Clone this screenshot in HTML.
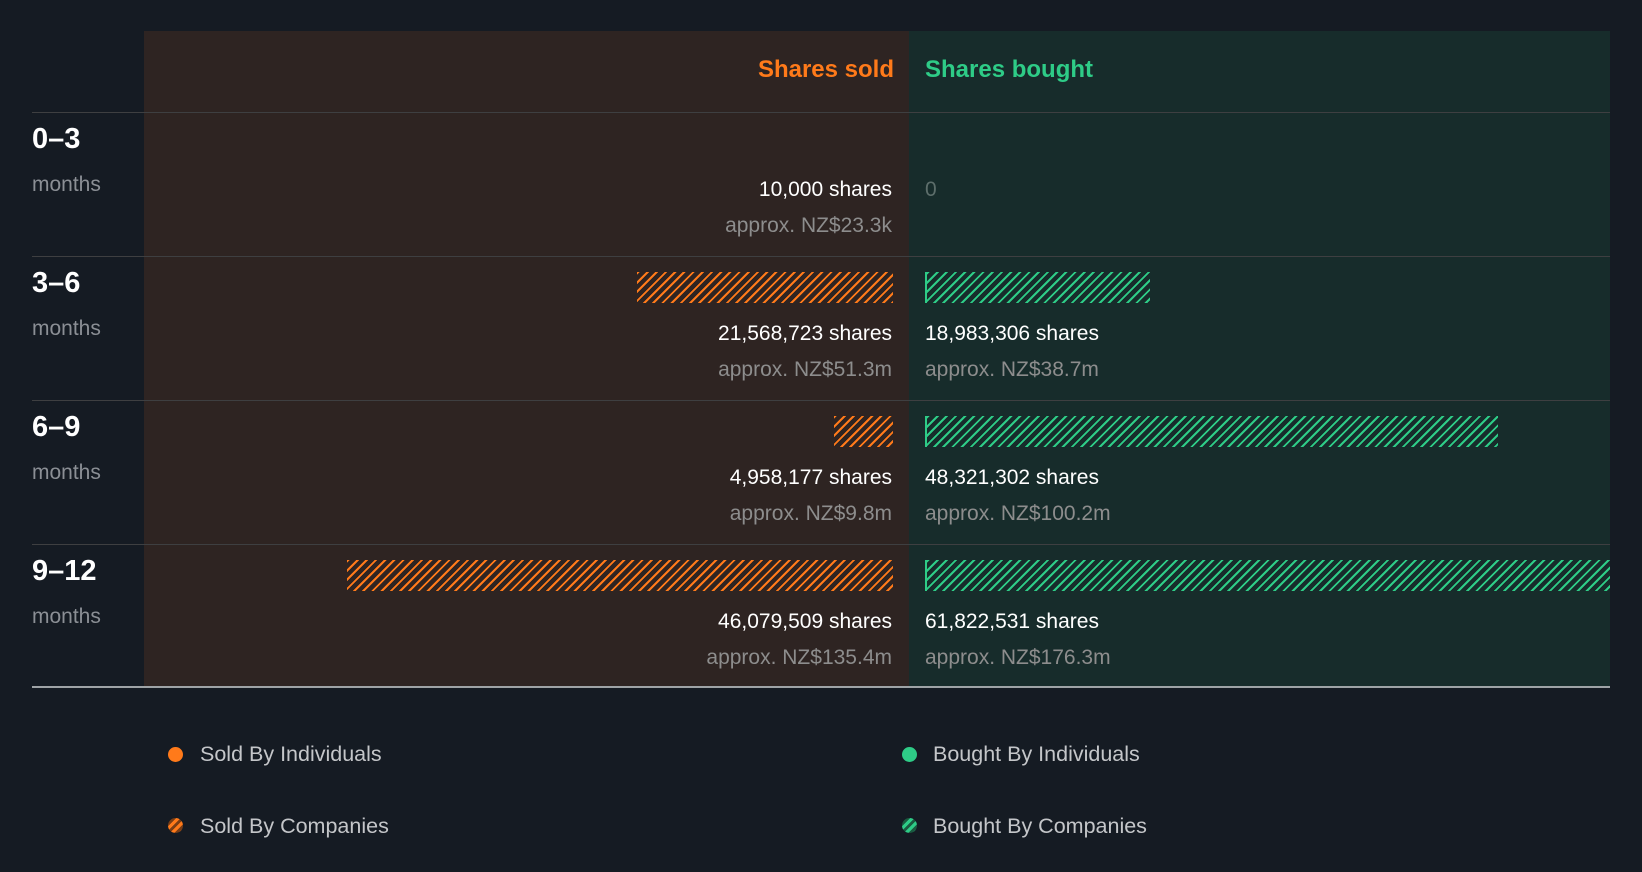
<!DOCTYPE html>
<html><head><style>
*{margin:0;padding:0;box-sizing:border-box}
body{width:1642px;height:872px;background:#151b23;font-family:"Liberation Sans",sans-serif;position:relative;overflow:hidden}
.a{position:absolute}
.sold{left:144px;top:31px;width:765px;height:656px;background:#2e2422}
.bought{left:909px;top:31px;width:701px;height:656px;background:#172c2b}
.line{left:32px;width:1578px;height:1px;background:#3e3f41}
.h{top:56px;font-weight:bold;font-size:24px}
.lab{left:32px;font-weight:bold;font-size:29px;color:#fff}
.mon{left:32px;font-size:21px;color:#8b8f95}
.sh{font-size:21px;color:#fff}
.ap{font-size:21px;color:#8d8d8d}
.r{right:750px;text-align:right}
.l{left:925px}
.bs{height:31px;background:repeating-linear-gradient(135deg,#ff7a1a 0 2px,transparent 2px 6.5px)}
.bb{height:31px;background:repeating-linear-gradient(135deg,#2ecc87 0 2px,transparent 2px 6.5px);border-left:2px solid #2ecc87}
.lg{font-size:21.5px;color:#c4c6c9}
.dot{width:15px;height:15px;border-radius:50%}
</style></head><body>
<div class="a sold"></div><div class="a bought"></div>
<div class="a h" style="right:748px;color:#ff7a1a">Shares sold</div>
<div class="a h" style="left:925px;color:#2ecc87">Shares bought</div>
<div class="a line" style="top:112px"></div>
<div class="a line" style="top:256px"></div>
<div class="a line" style="top:400px"></div>
<div class="a line" style="top:544px"></div>
<div class="a line" style="top:686px;height:2px;background:#9ea3a6"></div>

<div class="a lab" style="top:123px">0–3</div><div class="a mon" style="top:173px">months</div>
<div class="a lab" style="top:267px">3–6</div><div class="a mon" style="top:317px">months</div>
<div class="a lab" style="top:411px">6–9</div><div class="a mon" style="top:461px">months</div>
<div class="a lab" style="top:555px">9–12</div><div class="a mon" style="top:605px">months</div>

<div class="a sh r" style="top:178px">10,000 shares</div>
<div class="a ap r" style="top:214px">approx. NZ$23.3k</div>
<div class="a ap l" style="top:178px;color:#5d6e6b">0</div>

<div class="a bs" style="left:637px;width:256px;top:272px"></div>
<div class="a bb" style="left:925px;width:225px;top:272px"></div>
<div class="a sh r" style="top:322px">21,568,723 shares</div>
<div class="a ap r" style="top:358px">approx. NZ$51.3m</div>
<div class="a sh l" style="top:322px">18,983,306 shares</div>
<div class="a ap l" style="top:358px">approx. NZ$38.7m</div>

<div class="a bs" style="left:834px;width:59px;top:416px"></div>
<div class="a bb" style="left:925px;width:573px;top:416px"></div>
<div class="a sh r" style="top:466px">4,958,177 shares</div>
<div class="a ap r" style="top:502px">approx. NZ$9.8m</div>
<div class="a sh l" style="top:466px">48,321,302 shares</div>
<div class="a ap l" style="top:502px">approx. NZ$100.2m</div>

<div class="a bs" style="left:347px;width:546px;top:560px"></div>
<div class="a bb" style="left:925px;width:685px;top:560px"></div>
<div class="a sh r" style="top:610px">46,079,509 shares</div>
<div class="a ap r" style="top:646px">approx. NZ$135.4m</div>
<div class="a sh l" style="top:610px">61,822,531 shares</div>
<div class="a ap l" style="top:646px">approx. NZ$176.3m</div>

<div class="a dot" style="left:168px;top:747px;background:#ff7a1a"></div>
<div class="a lg" style="left:200px;top:742px">Sold By Individuals</div>
<div class="a dot" style="left:168px;top:818px;background:repeating-linear-gradient(135deg,#ff7a1a 0 3px,#7a3d14 3px 6px)"></div>
<div class="a lg" style="left:200px;top:814px">Sold By Companies</div>
<div class="a dot" style="left:902px;top:747px;background:#2ecc87"></div>
<div class="a lg" style="left:933px;top:742px">Bought By Individuals</div>
<div class="a dot" style="left:902px;top:818px;background:repeating-linear-gradient(135deg,#2ecc87 0 3px,#1a5a40 3px 6px)"></div>
<div class="a lg" style="left:933px;top:814px">Bought By Companies</div>
</body></html>
